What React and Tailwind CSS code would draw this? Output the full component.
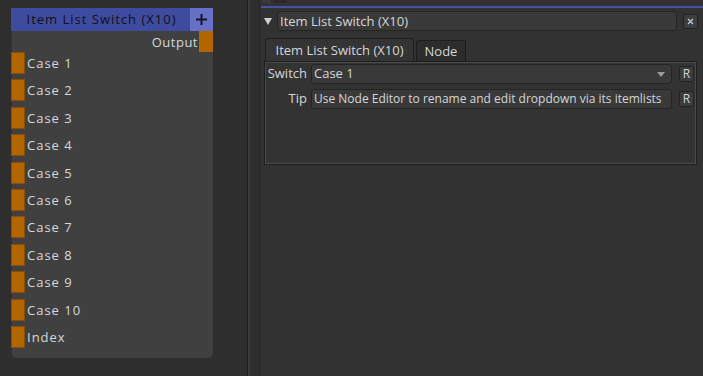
import React from "react";

const cases = ["Case 1", "Case 2", "Case 3", "Case 4", "Case 5", "Case 6", "Case 7", "Case 8", "Case 9", "Case 10", "Index"];

const Port = () => (
  <div className="w-[14px] h-[22px] bg-[#b36500] border border-[#8a4e05] shrink-0" />
);

const RButton = () => (
  <div className="w-[15px] h-[16px] rounded-[2px] border border-[#222] bg-[#3c3c3c] text-[#c9d4dc] text-[12px] leading-[14px] text-center shrink-0">
    R
  </div>
);

const NodeGraph = () => (
  <div className="w-[247px] shrink-0 h-full bg-[#2e2e2e] pt-[8px] pl-[11px]">
    <div className="w-[202px]">
      {/* header */}
      <div className="flex h-[23px] bg-[#3f4b9f]">
        <div className="flex-1 text-center text-[#101020] text-[13px] leading-[23px] pl-[2px] tracking-[1px]">
          Item List Switch (X10)
        </div>
        <div className="w-[23px] bg-[#6670c6] flex items-center justify-center">
          <svg width="13" height="13" viewBox="0 0 13 13">
            <path d="M6.5 1v11M1 6.5h11" stroke="#15152a" strokeWidth="2" />
          </svg>
        </div>
      </div>
      {/* body */}
      <div className="bg-[#404040] border-l border-[#333] rounded-b-[5px] pb-[5px]">
        <div className="flex h-[21px] justify-end">
          <span className="text-[#d5d9dc] text-[13px] leading-[22px] pr-[1px] tracking-[0.5px]">Output</span>
          <div className="w-[14px] h-[21px] bg-[#b36500]" />
        </div>
        {cases.map((c) => (
          <div key={c} className="flex items-start h-[27.4px] -ml-[1px]">
            <Port />
            <span className="text-[#d5d9dc] text-[13px] leading-[23px] pl-[2px] tracking-[1px]">{c}</span>
          </div>
        ))}
      </div>
    </div>
  </div>
);

const Properties = () => (
  <div className="flex-1 h-full bg-[#323232] flex flex-col">
    <div className="h-[6px] flex">
      <div className="ml-[2px] w-[10px] h-[3px] bg-[#3a3a3a] border-r border-[#262626]" />
      <div className="ml-[2px] w-[12px] h-[3px] bg-[#2a2a2a] border-r border-[#262626]" />
    </div>
    <div className="h-[2px] bg-[#4650a6] ml-[1px]" />
    <div className="flex items-center mt-[3px] h-[20px] pl-[4px] pr-[5px]">
      <svg width="8" height="7" viewBox="0 0 8 7" className="mr-[5px] shrink-0">
        <path d="M0 0h8L4 7z" fill="#d0d0d0" />
      </svg>
      <div className="flex-1 h-[20px] bg-[#393939] border border-[#242424] rounded-[3px] text-[#d3d7da] text-[13px] leading-[18px] pl-[2px]">
        Item List Switch (X10)
      </div>
      <div className="ml-[6px] w-[15px] h-[15px] shrink-0 rounded-[2px] border border-[#222] bg-[#3d3d3d] flex items-center justify-center">
        <svg width="7" height="7" viewBox="0 0 7 7">
          <path d="M1 1l5 5M6 1L1 6" stroke="#bcd0e0" strokeWidth="1.2" />
        </svg>
      </div>
    </div>
    <div className="pl-[4px] pr-[6px] mt-[7px]">
      <div className="flex items-end h-[23px] pl-[1px]">
        <div className="w-[149px] h-[23px] bg-[#343434] border border-b-0 border-[#1e1e1e] rounded-t-[3px] text-[#d3d7da] text-[13px] leading-[22px] text-center">
          Item List Switch (X10)
        </div>
        <div className="ml-[2px] w-[50px] h-[21px] bg-[#2c2c2c] border border-b-0 border-[#1e1e1e] rounded-t-[3px] text-[#d3d7da] text-[13px] leading-[20px] text-center">
          Node
        </div>
      </div>
      <div className="h-[104px] border border-[#1e1e1e] bg-[#333]">
        <div className="h-full border border-[#4a4a4a] pt-[1px] pr-[1px]">
          <div className="flex items-center h-[20px]">
            <div className="w-[43px] text-right text-[#d3d7da] text-[13px] pr-[2px]">Switch</div>
            <div className="ml-[2px] flex-1 h-[20px] bg-[#393939] border border-[#242424] rounded-[3px] flex items-center justify-between pl-[2px] pr-[6px]">
              <span className="text-[#d3d7da] text-[13px]">Case 1</span>
              <svg width="8" height="5" viewBox="0 0 8 5">
                <path d="M0 0h8L4 5z" fill="#9a9a9a" />
              </svg>
            </div>
            <div className="ml-[7px]">
              <RButton />
            </div>
          </div>
          <div className="flex items-center h-[20px] mt-[5px]">
            <div className="w-[43px] text-right text-[#d3d7da] text-[13px] pr-[2px]">Tip</div>
            <div className="ml-[2px] flex-1 h-[20px] bg-[#393939] border border-[#242424] rounded-[3px] pl-[2px] text-[#d3d7da] text-[12px] leading-[18px] whitespace-nowrap overflow-hidden">
              Use Node Editor to rename and edit dropdown via its itemlists
            </div>
            <div className="ml-[7px]">
              <RButton />
            </div>
          </div>
        </div>
      </div>
    </div>
  </div>
);

export default function App() {
  return (
    <div className="w-[703px] h-[376px] flex overflow-hidden" style={{ fontFamily: '"Open Sans", "DejaVu Sans", sans-serif' }}>
      <NodeGraph />
      <div className="w-[1px] shrink-0 h-full bg-[#1c1c1c]" />
      <div className="w-[2px] shrink-0 h-full bg-[#3b3b3b]" />
      <div className="w-[9px] shrink-0 h-full bg-[#2e2e2e]" />
      <div className="w-[1px] shrink-0 h-full bg-[#262626]" />
      <Properties />
    </div>
  );
}
